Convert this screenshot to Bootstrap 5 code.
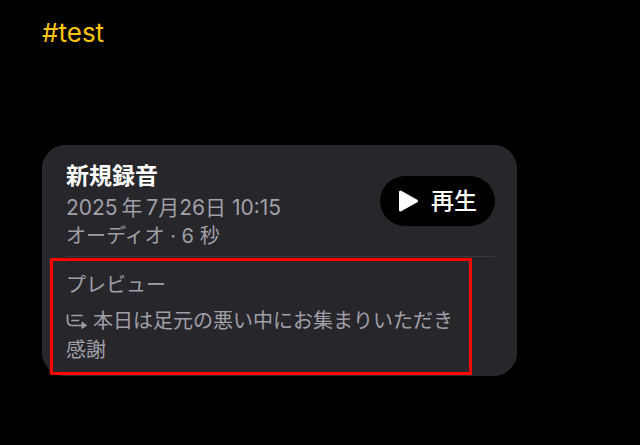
<!DOCTYPE html>
<html lang="ja">
<head>
<meta charset="utf-8">
<meta name="viewport" content="width=device-width, initial-scale=1">
<title>新規録音</title>
<link href="https://cdn.jsdelivr.net/npm/bootstrap@5.3.0/dist/css/bootstrap.min.css" rel="stylesheet">
<style>
body { background: #000; font-family: Inter, "Noto Sans CJK JP", sans-serif; font-size: 20px; line-height: 29px; color: #a09fa7; }
.note { padding: 14px 123px 0 42px; }
.tag { color: #fcc50f; font-size: 26px; line-height: 38px; margin-bottom: 93px; }
.memo { background: #27272b; border-radius: 24px; box-shadow: inset 0 0 0 1px #2b2b2f; padding: 15px 0 1px; }
.memo-head { margin: 0 22px 0 24px; padding-bottom: 5px; border-bottom: 1px solid #39393d; }
.memo-title { color: #fff; font-size: 23px; line-height: 33px; font-weight: 700; }
.memo-date { font-size: 21px; }
.play, .play:hover { background: #000; color: #fff; }
.play { font-size: 23px; line-height: 30px; padding: 10px 18px; gap: 12px; font-weight: 500; border: 0; margin-top: 16px; }
.preview { border: 3px solid #f00; margin: 1px 45px 0 8px; padding: 10px 3px 7px 13px; }
.preview-label { font-size: 20px; line-height: 29px; font-weight: 400; margin-bottom: 7px; }
.summary-icon { margin-right: 6px; vertical-align: -2px; }
</style>
<script src="https://cdn.jsdelivr.net/npm/bootstrap@5.3.0/dist/js/bootstrap.bundle.min.js"></script>
</head>
<body>
<main class="note">
  <p class="tag">#test</p>
  <article class="memo">
    <div class="memo-head d-flex justify-content-between align-items-start">
      <div>
        <h1 class="memo-title mb-0">新規録音</h1>
        <div class="memo-date">2025&thinsp;年&thinsp;7月26日 10:15</div>
        <div>オーディオ · 6 秒</div>
      </div>
      <button type="button" class="play btn rounded-pill d-flex align-items-center">
        <svg width="21" height="22" viewBox="0 0 21 22" aria-hidden="true"><path d="M2.500 2v18L18.500 11z" fill="#fff" stroke="#fff" stroke-width="3" stroke-linejoin="round"/></svg>
        再生
      </button>
    </div>
    <section class="preview">
      <h2 class="preview-label">プレビュー</h2>
      <p class="mb-0"><svg class="summary-icon" width="21" height="17" viewBox="0 0 21 17" fill="none" stroke="#a09fa7" stroke-width="1.7" stroke-linecap="round" stroke-linejoin="round" aria-hidden="true"><path d="M1.500 2v5.500q0 5 5 5H17M6 2.500H16M6 7.500H12.500"/><path d="M16 9.500v6l4.300-3z" fill="#a09fa7" stroke-width="1"/></svg>本日は足元の悪い中にお集まりいただき感謝</p>
    </section>
  </article>
</main>
</body>
</html>
